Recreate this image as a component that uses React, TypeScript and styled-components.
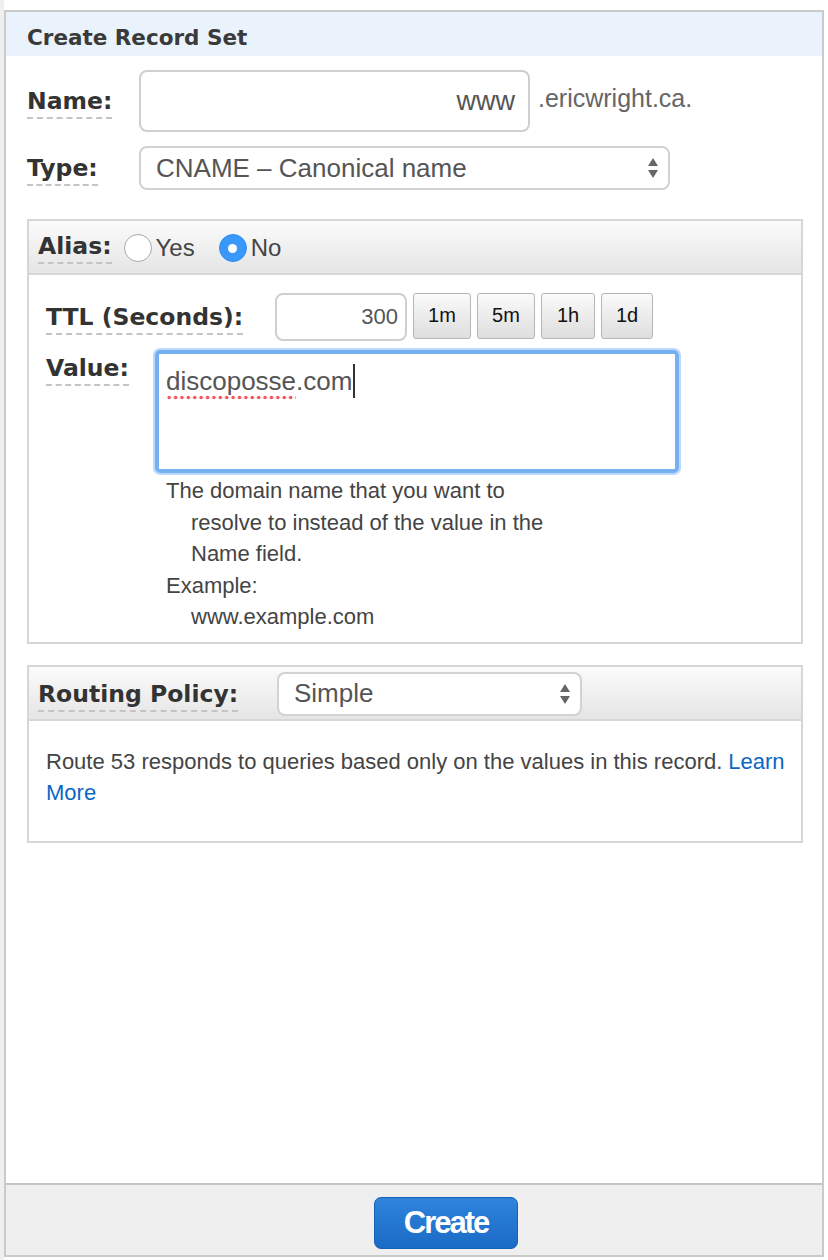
import React from 'react';
import styled, { createGlobalStyle } from 'styled-components';

const GlobalStyle = createGlobalStyle`
  html, body {
    margin: 0;
    padding: 0;
  }
  body {
    background: linear-gradient(to right, #efefef 4px, #ffffff 4px);
    font-family: "Liberation Sans", Arial, sans-serif;
    color: #444;
  }
`;

const Panel = styled.div`
  box-sizing: border-box;
  margin: 10px 0 0 4px;
  width: 820px;
  height: 1247px;
  border: 2px solid #cacaca;
  background: #fff;
  display: flex;
  flex-direction: column;
`;

const PanelHeader = styled.div`
  box-sizing: border-box;
  height: 44px;
  background: #eaf2fc;
  padding: 6px 0 0 21px;
  display: flex;
  align-items: center;
  font-family: "DejaVu Sans", Verdana, sans-serif;
  font-weight: bold;
  font-size: 21.5px;
  color: #3a3a3a;
`;

const PanelBody = styled.div`
  flex: 1;
  padding: 14px 19px 0 21px;
`;

const FieldRow = styled.div<{ $gap?: number; $top?: boolean }>`
  display: flex;
  align-items: ${({ $top }) => ($top ? 'flex-start' : 'center')};
  margin-bottom: ${({ $gap }) => $gap ?? 0}px;
`;

const Label = styled.span<{ $width?: number; $offset?: number }>`
  display: inline-block;
  width: ${({ $width }) => ($width ? `${$width}px` : 'auto')};
  padding-top: ${({ $offset }) => $offset ?? 0}px;
  flex-shrink: 0;
`;

const LabelText = styled.span`
  font-family: "DejaVu Sans", Verdana, sans-serif;
  font-weight: bold;
  font-size: 23.5px;
  color: #333;
  border-bottom: 2px dashed #c4c4c4;
  padding-bottom: 2px;
`;

const TextBox = styled.div<{ $width: number; $height: number; $size: number }>`
  box-sizing: border-box;
  width: ${({ $width }) => $width}px;
  height: ${({ $height }) => $height}px;
  border: 2px solid #cfcfcf;
  border-radius: 8px;
  background: #fff;
  display: flex;
  align-items: center;
  justify-content: flex-end;
  padding: 0 ${({ $size }) => ($size > 24 ? 13 : 7)}px;
  font-size: ${({ $size }) => $size}px;
  color: #555;
`;

const Suffix = styled.span`
  margin-left: 8px;
  font-size: 25px;
  color: #666;
  align-self: flex-start;
  margin-top: 14px;
`;

const SelectBox = styled.div<{ $width: number }>`
  box-sizing: border-box;
  width: ${({ $width }) => $width}px;
  height: 44px;
  border: 2px solid #d2d2d2;
  border-radius: 8px;
  background: #fff;
  display: flex;
  align-items: center;
  justify-content: space-between;
  padding: 0 9px 0 15px;
  font-size: 26px;
  color: #555;
`;

const Arrows = () => (
  <svg width="12" height="22" viewBox="0 0 12 22">
    <path d="M6 1 L11 9 L1 9 Z" fill="#666" />
    <path d="M6 21 L11 13 L1 13 Z" fill="#666" />
  </svg>
);

const Section = styled.div<{ $top: number }>`
  margin-top: ${({ $top }) => $top}px;
  border: 2px solid #d6d6d6;
`;

const SectionHeader = styled.div`
  height: 54px;
  box-sizing: border-box;
  background: linear-gradient(to bottom, #fbfbfb, #e5e5e5);
  border-bottom: 2px solid #d6d6d6;
  display: flex;
  align-items: center;
  padding: 2px 0 0 9px;
`;

const SectionBody = styled.div<{ $pad: string }>`
  padding: ${({ $pad }) => $pad};
`;

const RadioGroup = styled.label`
  display: flex;
  align-items: center;
  font-size: 24px;
  color: #444;
  margin-left: 12px;
  & + & {
    margin-left: 24px;
  }
`;

const RadioCircle = styled.span<{ $checked?: boolean }>`
  box-sizing: border-box;
  width: 28px;
  height: 28px;
  border-radius: 50%;
  margin-right: 4px;
  display: inline-flex;
  align-items: center;
  justify-content: center;
  background: ${({ $checked }) => ($checked ? '#3a98fb' : '#fff')};
  border: ${({ $checked }) => ($checked ? '1px solid #2f8cf0' : '1px solid #a9a9a9')};
  &::after {
    content: '';
    display: ${({ $checked }) => ($checked ? 'block' : 'none')};
    width: 9px;
    height: 9px;
    border-radius: 50%;
    background: #fff;
  }
`;

const TtlButton = styled.button<{ $width: number }>`
  box-sizing: border-box;
  width: ${({ $width }) => $width}px;
  height: 46px;
  margin: -3px 0 0 6px;
  border: 1px solid #b5b5b5;
  border-radius: 3px;
  background: linear-gradient(to bottom, #fafafa, #dedede);
  font-family: "Liberation Sans", Arial, sans-serif;
  font-size: 20px;
  color: #111;
  padding: 0;
`;

const ValueArea = styled.div`
  box-sizing: border-box;
  width: 524px;
  height: 123px;
  border: 4px solid #76b0f0;
  border-radius: 5px;
  box-shadow: 0 0 0 2px #bcdafb;
  padding: 12px 7px;
  font-size: 26px;
  color: #555;
  display: flex;
  align-items: flex-start;
`;

const Misspelled = styled.span`
  padding-bottom: 3px;
  background-image: radial-gradient(circle, #f25a5a 1.6px, transparent 2.1px);
  background-size: 6.4px 5px;
  background-repeat: repeat-x;
  background-position: 0 100%;
`;

const Caret = styled.span`
  display: inline-block;
  width: 2px;
  height: 34px;
  background: #333;
  margin: -2px 0 0 1px;
`;

const Help = styled.div`
  margin: 2px 0 0 120px;
  font-size: 22px;
  line-height: 31.5px;
  color: #444;
  padding-bottom: 9px;
`;

const HelpLine = styled.div<{ $indent?: boolean }>`
  padding-left: ${({ $indent }) => ($indent ? '25px' : '0')};
`;

const Info = styled.p`
  margin: 0;
  font-size: 22px;
  line-height: 31.5px;
  color: #444;
`;

const Link = styled.a`
  color: #0b67c4;
  text-decoration: none;
  margin-left: 6px;
`;

const Footer = styled.div`
  height: 72px;
  box-sizing: border-box;
  border-top: 2px solid #c4c4c4;
  background: #efefef;
  display: flex;
  justify-content: center;
  padding: 12px 0 0 64px;
`;

const CreateButton = styled.button`
  width: 144px;
  height: 52px;
  border: 1px solid #1461b8;
  border-radius: 7px;
  background: linear-gradient(to bottom, #2f84da, #1a6bc6);
  color: #fff;
  font-family: "Liberation Sans", Arial, sans-serif;
  font-weight: bold;
  font-size: 31px;
  letter-spacing: -2px;
  padding: 0;
`;

export default function App() {
  return (
    <>
      <GlobalStyle />
      <Panel>
        <PanelHeader>Create Record Set</PanelHeader>
        <PanelBody>
          <FieldRow $gap={14}>
            <Label $width={112}>
              <LabelText>Name:</LabelText>
            </Label>
            <TextBox $width={391} $height={62} $size={27}>www</TextBox>
            <Suffix>.ericwright.ca.</Suffix>
          </FieldRow>
          <FieldRow>
            <Label $width={112}>
              <LabelText>Type:</LabelText>
            </Label>
            <SelectBox $width={531}>
              CNAME – Canonical name
              <Arrows />
            </SelectBox>
          </FieldRow>

          <Section $top={29}>
            <SectionHeader>
              <LabelText>Alias:</LabelText>
              <RadioGroup>
                <RadioCircle />
                Yes
              </RadioGroup>
              <RadioGroup>
                <RadioCircle $checked />
                No
              </RadioGroup>
            </SectionHeader>
            <SectionBody $pad="18px 0 0 17px">
              <FieldRow $gap={9}>
                <Label $width={229}>
                  <LabelText>TTL (Seconds):</LabelText>
                </Label>
                <TextBox $width={132} $height={48} $size={22}>300</TextBox>
                <TtlButton $width={58}>1m</TtlButton>
                <TtlButton $width={58}>5m</TtlButton>
                <TtlButton $width={54}>1h</TtlButton>
                <TtlButton $width={52}>1d</TtlButton>
              </FieldRow>
              <FieldRow $top>
                <Label $width={109} $offset={4}>
                  <LabelText>Value:</LabelText>
                </Label>
                <ValueArea>
                  <Misspelled>discoposse</Misspelled>.com
                  <Caret />
                </ValueArea>
              </FieldRow>
              <Help>
                <HelpLine>The domain name that you want to</HelpLine>
                <HelpLine $indent>resolve to instead of the value in the</HelpLine>
                <HelpLine $indent>Name field.</HelpLine>
                <HelpLine>Example:</HelpLine>
                <HelpLine $indent>www.example.com</HelpLine>
              </Help>
            </SectionBody>
          </Section>

          <Section $top={21}>
            <SectionHeader>
              <Label $width={239}>
                <LabelText>Routing Policy:</LabelText>
              </Label>
              <SelectBox $width={305}>
                Simple
                <Arrows />
              </SelectBox>
            </SectionHeader>
            <SectionBody $pad="25px 10px 32px 17px">
              <Info>
                Route 53 responds to queries based only on the values in this record.
                <Link href="#">Learn More</Link>
              </Info>
            </SectionBody>
          </Section>
        </PanelBody>
        <Footer>
          <CreateButton>Create</CreateButton>
        </Footer>
      </Panel>
    </>
  );
}
